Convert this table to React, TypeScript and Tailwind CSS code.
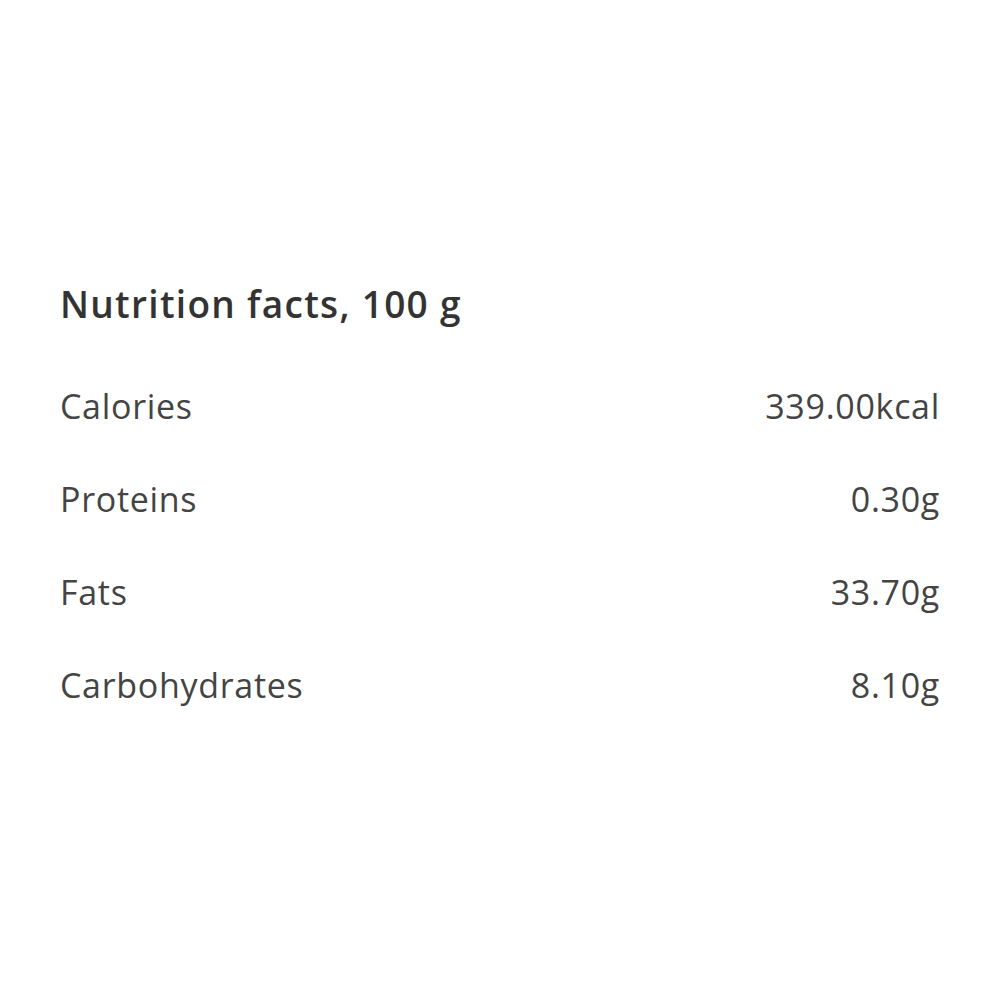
const ROWS = [
  { label: "Calories", value: "339.00kcal" },
  { label: "Proteins", value: "0.30g" },
  { label: "Fats", value: "33.70g" },
  { label: "Carbohydrates", value: "8.10g" },
];

export default function App() {
  return (
    <div className="w-[1000px] h-[1000px] bg-white flex flex-col justify-center px-[60px]" style={{ fontFamily: "'Open Sans', Lato, sans-serif" }}>
      <div className="-mt-[13px]">
        <h2 className="text-[37px] leading-[44px] font-semibold tracking-[1.3px] text-[#333333]">Nutrition facts, 100 g</h2>
        <div className="mt-[60px] flex flex-col gap-[53px]">
          {ROWS.map(r => (
            <div key={r.label} className="flex items-center justify-between text-[34px] leading-[40px] tracking-[0.7px] text-[#444444]">
              <span>{r.label}</span>
              <span>{r.value}</span>
            </div>
          ))}
        </div>
      </div>
    </div>
  );
}
